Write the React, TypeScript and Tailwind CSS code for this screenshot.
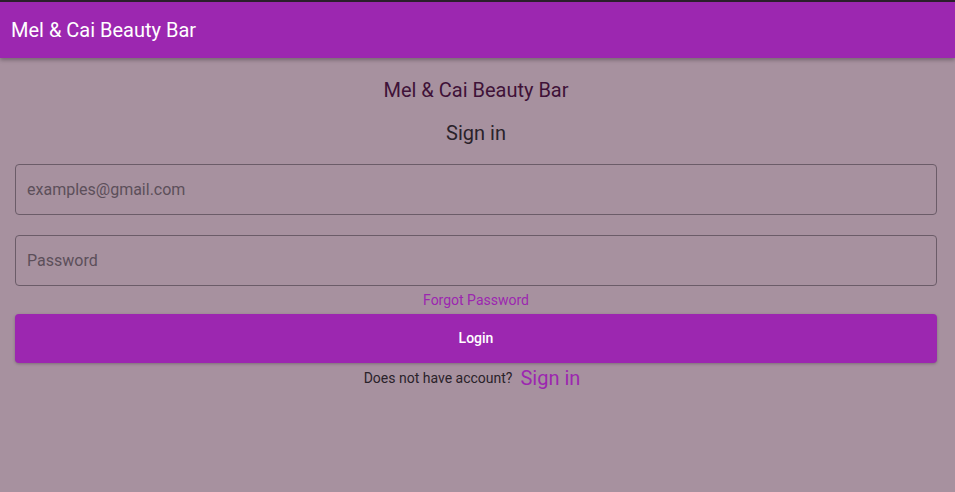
export default function App() {
  return (
    <div className="min-h-[492px] bg-[#a7919f] font-['Roboto',sans-serif]">
      {/* header */}
      <header className="h-[58px] bg-[#9c27b0] border-t-2 border-[#2a1f2a] flex items-center px-[11px] shadow-[0_2px_4px_rgba(0,0,0,0.3)]">
        <span className="text-white text-[20px]">Mel &amp; Cai Beauty Bar</span>
      </header>

      <main className="pl-[15px] pr-[18px] pt-[20px] text-center">
        <h1 className="text-[20px] text-[#3f1238] leading-[24px]">Mel &amp; Cai Beauty Bar</h1>
        <h2 className="text-[20px] text-[#2a222a] leading-[24px] mt-[19px]">Sign in</h2>

        <div className="mt-[19px] flex flex-col gap-[20px]">
          <input
            placeholder="examples@gmail.com"
            className="h-[51px] w-full rounded-[4px] border border-[#6b5c68] bg-transparent px-[11px] text-[16px] placeholder:text-[#5c4f5a] outline-none"
          />
          <input
            placeholder="Password"
            type="password"
            className="h-[51px] w-full rounded-[4px] border border-[#6b5c68] bg-transparent px-[11px] text-[16px] placeholder:text-[#5c4f5a] outline-none"
          />
        </div>

        <div className="mt-[5px] text-[14px] leading-[18px] text-[#9c27b0]">Forgot Password</div>

        <button className="mt-[5px] h-[49px] w-full rounded-[4px] bg-[#9c27b0] text-white text-[14px] font-medium shadow-[0_1px_3px_rgba(0,0,0,0.25)]">
          Login
        </button>

        <div className="pr-[8px] flex items-center justify-center gap-[8px]">
          <span className="text-[14px] text-[#2a222a]">Does not have account?</span>
          <span className="text-[20px] text-[#9c27b0]">Sign in</span>
        </div>
      </main>
    </div>
  );
}
